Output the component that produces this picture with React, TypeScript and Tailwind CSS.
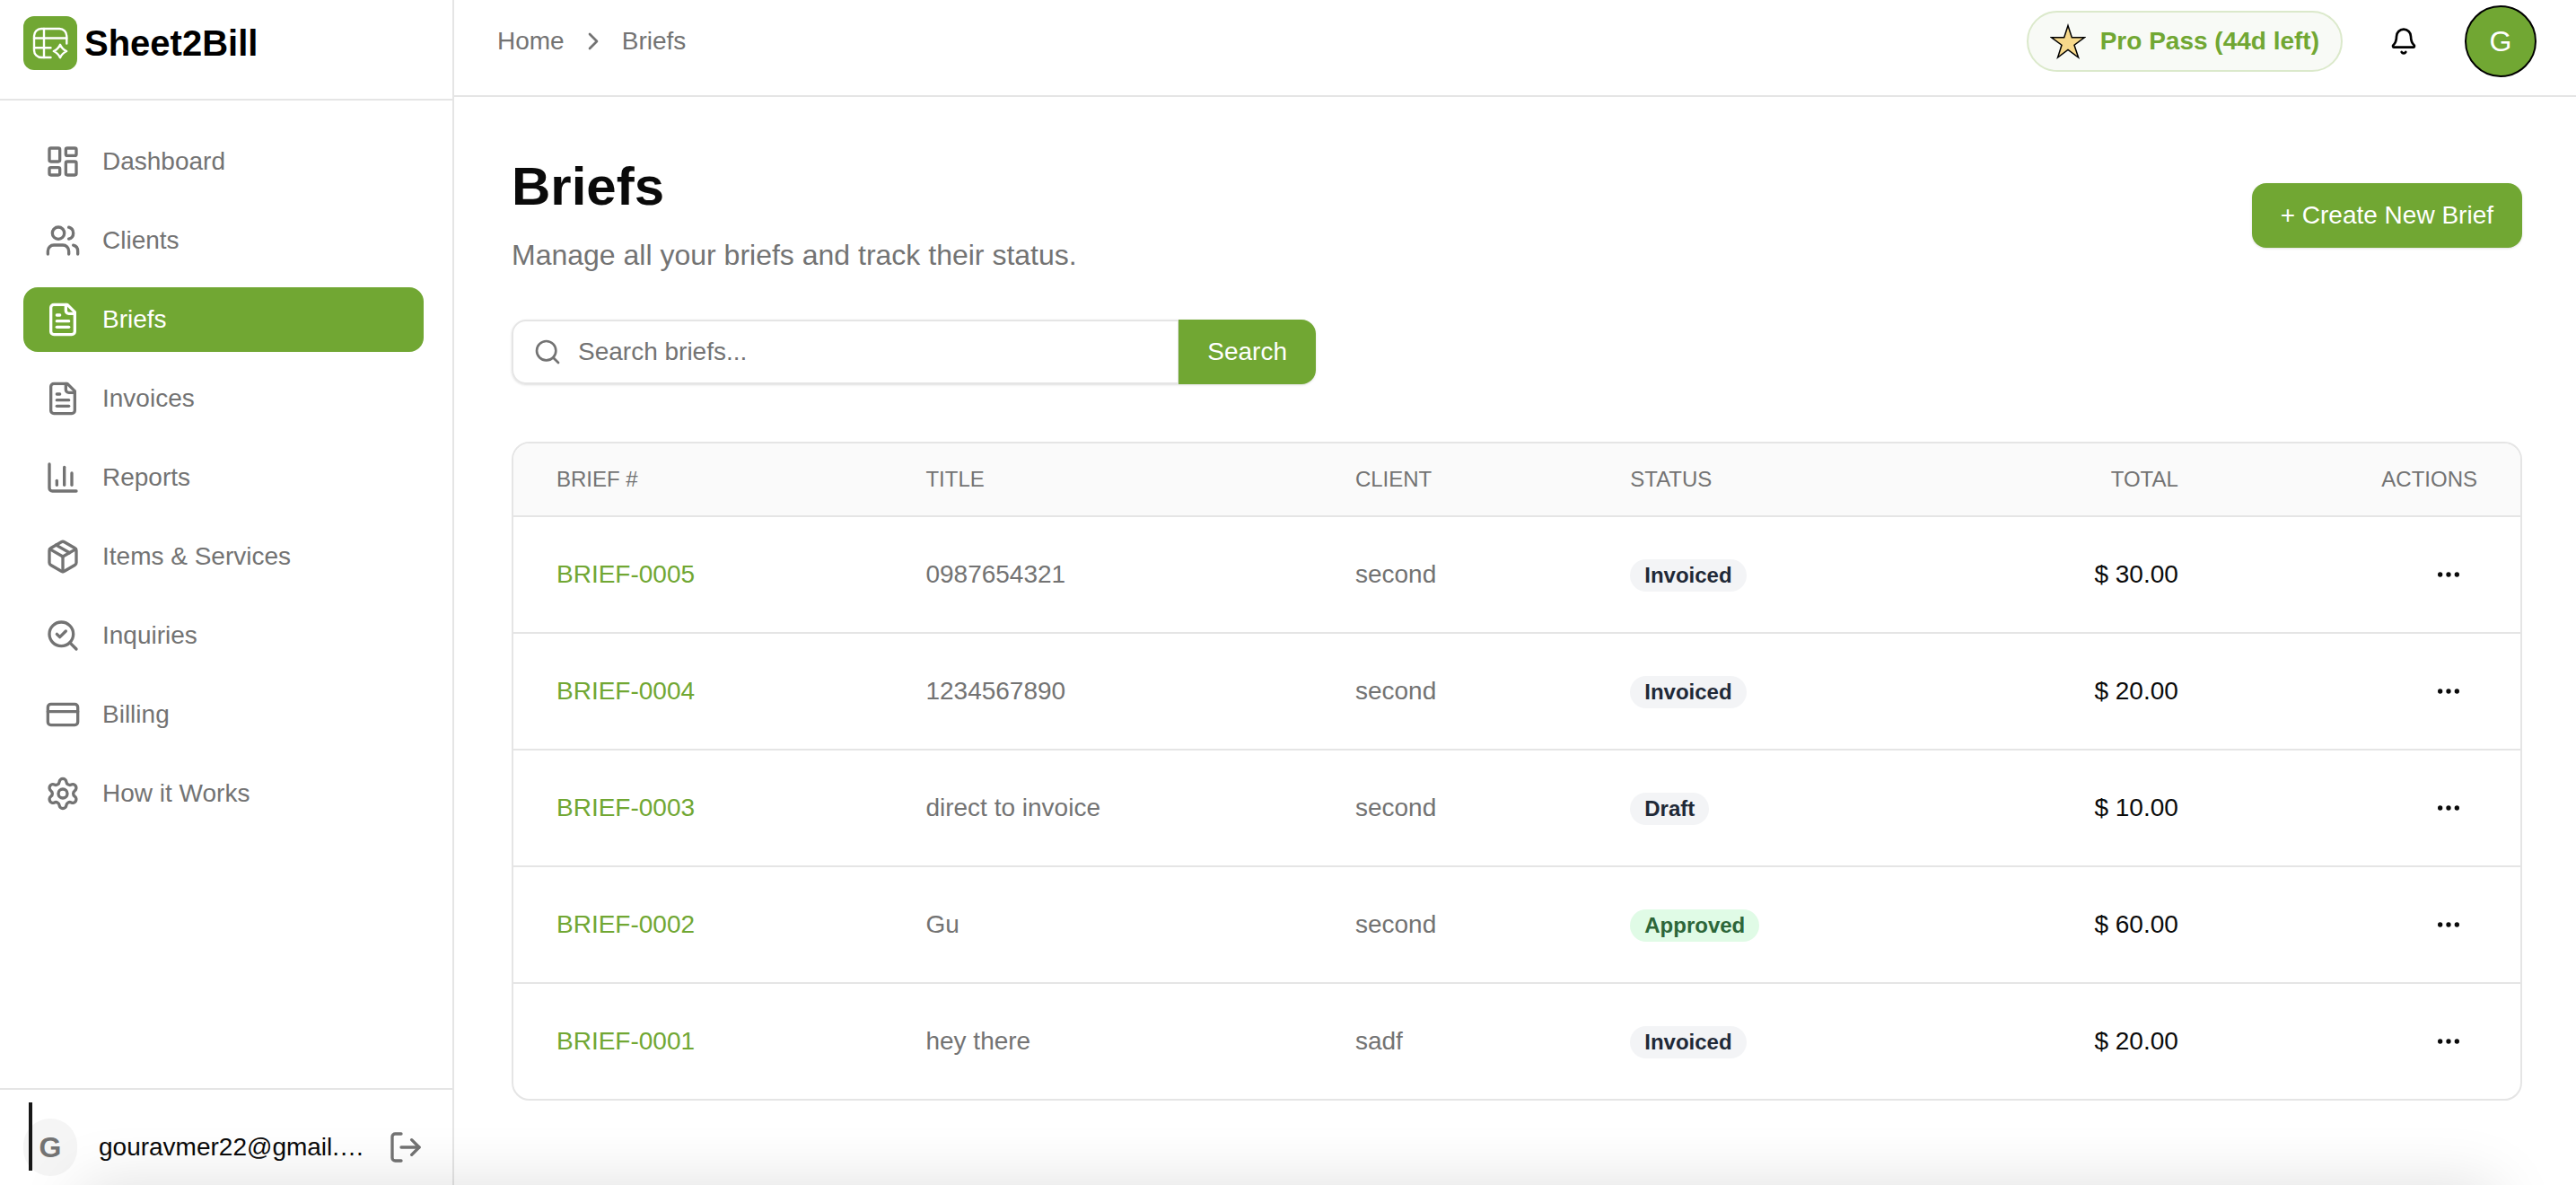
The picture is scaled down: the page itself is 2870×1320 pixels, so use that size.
import React from "react";
import {
  Bell,
  ChartColumn,
  ChevronRight,
  CreditCard,
  Ellipsis,
  LayoutDashboard,
  LogOut,
  Package,
  Search,
  SearchCheck,
  Settings,
  Users,
} from "lucide-react";
import type { ComponentType } from "react";

type IconProps = { className?: string };

function FileText({ className }: IconProps) {
  return (
    <svg
      viewBox="0 0 24 24"
      fill="none"
      stroke="currentColor"
      strokeWidth="2"
      strokeLinecap="round"
      strokeLinejoin="round"
      className={className}
      aria-hidden="true"
    >
      <path d="M15 2H6a2 2 0 0 0-2 2v16a2 2 0 0 0 2 2h12a2 2 0 0 0 2-2V7Z" />
      <path d="M14 2v4a2 2 0 0 0 2 2h4" />
      <path d="M10 9H8" />
      <path d="M16 13H8" />
      <path d="M16 17H8" />
    </svg>
  );
}

function LogoMark() {
  return (
    <svg
      viewBox="0 0 60 60"
      fill="none"
      stroke="white"
      strokeWidth="2.4"
      strokeLinecap="round"
      strokeLinejoin="round"
      className="size-[60px] shrink-0 rounded-xl bg-[#71a733]"
      aria-hidden="true"
    >
      <path d="M48.300 30.500V22a8 8 0 0 0-8-8H20a8 8 0 0 0-8 8v16a8 8 0 0 0 8 8H30.500" />
      <path d="M23 14V46M12 24.500H48.300M12 35.300H30.500" />
      <path d="M41 31.800q2.200 5 7.200 7.200-5 2.200-7.200 7.200-2.200-5-7.200-7.200 5-2.200 7.200-7.200Z" />
    </svg>
  );
}

function StarIcon() {
  return (
    <svg viewBox="0 0 40 40" className="size-10 shrink-0" aria-hidden="true">
      <path
        d="M20 2.500 24.300 15.800H38.300L27 24.200 31.600 38 20 29.500 8.600 38 13 24.200 1.700 15.800H15.700Z"
        fill="#f7d98b"
        stroke="#000000"
        strokeWidth="1.500"
      />
    </svg>
  );
}

const navItems: { label: string; icon: ComponentType<IconProps>; active?: boolean }[] = [
  { label: "Dashboard", icon: LayoutDashboard },
  { label: "Clients", icon: Users },
  { label: "Briefs", icon: FileText, active: true },
  { label: "Invoices", icon: FileText },
  { label: "Reports", icon: ChartColumn },
  { label: "Items & Services", icon: Package },
  { label: "Inquiries", icon: SearchCheck },
  { label: "Billing", icon: CreditCard },
  { label: "How it Works", icon: Settings },
];

const briefs = [
  { id: "BRIEF-0005", title: "0987654321", client: "second", status: "Invoiced", total: "$ 30.00" },
  { id: "BRIEF-0004", title: "1234567890", client: "second", status: "Invoiced", total: "$ 20.00" },
  { id: "BRIEF-0003", title: "direct to invoice", client: "second", status: "Draft", total: "$ 10.00" },
  { id: "BRIEF-0002", title: "Gu", client: "second", status: "Approved", total: "$ 60.00" },
  { id: "BRIEF-0001", title: "hey there", client: "sadf", status: "Invoiced", total: "$ 20.00" },
];

function Sidebar() {
  return (
    <aside className="flex w-[506px] shrink-0 flex-col border-r-2 border-[#e5e5e5]">
      <div className="flex h-28 items-center gap-2 border-b-2 border-[#e5e5e5] px-[26px] pb-[14px]">
        <LogoMark />
        <span className="text-[40px] leading-none font-bold text-black">Sheet2Bill</span>
      </div>
      <nav className="flex flex-1 flex-col gap-4 py-8 pr-8 pl-[26px]">
        {navItems.map(({ label, icon: Icon, active }) => (
          <a
            key={label}
            href="#"
            aria-current={active ? "page" : undefined}
            className={
              active
                ? "flex h-[72px] items-center gap-6 rounded-2xl bg-[#71a733] px-6 text-white"
                : "flex h-[72px] items-center gap-6 rounded-2xl px-6 text-[#737373]"
            }
          >
            <Icon className="size-10 shrink-0" />
            {label}
          </a>
        ))}
      </nav>
      <div className="relative flex h-[108px] items-center gap-6 border-t-2 border-[#e5e5e5] pt-[22px] pr-8 pl-[26px]">
        <span className="absolute top-[14px] left-8 h-[76px] w-1 bg-[#171717]" />
        <span className="flex h-16 w-[60px] shrink-0 items-center justify-center rounded-full bg-[#f5f5f5] text-[32px] font-bold text-[#737373]">
          G
        </span>
        <span className="whitespace-nowrap text-[#0a0a0a]">gouravmer22@gmail.…</span>
        <button type="button" aria-label="Log out" className="ml-auto text-[#737373]">
          <LogOut className="size-10" />
        </button>
      </div>
    </aside>
  );
}

function TopBar() {
  return (
    <header className="flex h-[108px] shrink-0 items-center justify-between border-b-2 border-[#e5e5e5] pr-11 pb-[14px] pl-12">
      <nav aria-label="Breadcrumb" className="flex items-center gap-4 text-[#737373]">
        <a href="#">Home</a>
        <ChevronRight className="size-8" />
        <a href="#">Briefs</a>
      </nav>
      <div className="flex items-center gap-8">
        <a
          href="#"
          className="flex h-[68px] items-center gap-4 rounded-full border-2 border-[#dbe9cb] bg-[#f8faf6] px-6 font-bold text-[#71a733]"
        >
          <StarIcon />
          Pro Pass (44d left)
        </a>
        <button
          type="button"
          aria-label="Notifications"
          className="flex size-[72px] items-center justify-center text-black"
        >
          <Bell className="size-8" />
        </button>
        <button
          type="button"
          aria-label="Account"
          className="flex size-20 items-center justify-center rounded-full border-2 border-black bg-[#71a733] text-[32px] text-white"
        >
          G
        </button>
      </div>
    </header>
  );
}

function SearchForm() {
  return (
    <form
      className="mt-12 flex h-[72px] w-full max-w-4xl rounded-2xl shadow-sm"
      onSubmit={(event) => event.preventDefault()}
    >
      <label className="flex min-w-0 flex-1 items-center gap-[18px] rounded-l-2xl border-2 border-r border-[#e5e5e5] bg-white pl-[22px] text-[#737373]">
        <Search className="size-8 shrink-0" />
        <input
          type="text"
          aria-label="Search briefs"
          placeholder="Search briefs..."
          className="min-w-0 flex-1 bg-transparent outline-none placeholder:text-[#737373]"
        />
      </label>
      <button type="submit" className="rounded-r-2xl bg-[#71a733] px-8 text-white">
        Search
      </button>
    </form>
  );
}

function StatusBadge({ status }: { status: string }) {
  return (
    <span
      className={
        status === "Approved"
          ? "inline-block rounded-full bg-[#e0fbe6] px-4 text-[24px] leading-9 font-bold text-[#2d6639]"
          : "inline-block rounded-full bg-[#f3f4f6] px-4 text-[24px] leading-9 font-bold text-[#1f2937]"
      }
    >
      {status}
    </span>
  );
}

function BriefsTable() {
  return (
    <div className="mt-16 overflow-hidden rounded-[20px] border-2 border-[#e5e5e5]">
      <table className="w-full table-fixed border-separate border-spacing-0 text-left">
        <thead>
          <tr className="h-[82px] bg-[#fafafa] text-[24px] text-[#737373] uppercase *:border-b-2 *:border-[#e5e5e5]">
            <th scope="col" className="w-[18.4%] px-12 font-normal">Brief #</th>
            <th scope="col" className="w-[21.4%] px-12 font-normal">Title</th>
            <th scope="col" className="w-[13.7%] px-12 font-normal">Client</th>
            <th scope="col" className="w-[17%] px-12 font-normal">Status</th>
            <th scope="col" className="w-[14.6%] px-12 text-right font-normal">Total</th>
            <th scope="col" className="px-12 text-right font-normal">Actions</th>
          </tr>
        </thead>
        <tbody>
          {briefs.map((brief) => (
            <tr
              key={brief.id}
              className="h-[130px] *:border-b-2 *:border-[#e5e5e5] last:h-32 last:*:border-b-0"
            >
              <td className="px-12">
                <a href="#" className="text-[#71a733]">
                  {brief.id}
                </a>
              </td>
              <td className="px-12 text-[#737373]">{brief.title}</td>
              <td className="px-12 text-[#737373]">{brief.client}</td>
              <td className="px-12">
                <StatusBadge status={brief.status} />
              </td>
              <td className="px-12 text-right text-[#0a0a0a]">{brief.total}</td>
              <td className="px-12">
                <button
                  type="button"
                  aria-label={`Actions for ${brief.id}`}
                  className="ml-auto flex size-16 items-center justify-center text-[#0a0a0a]"
                >
                  <Ellipsis className="size-8" />
                </button>
              </td>
            </tr>
          ))}
        </tbody>
      </table>
    </div>
  );
}

export default function App() {
  return (
    <div className="flex min-h-screen bg-white font-['Liberation_Sans',Arial,sans-serif] text-[28px] leading-10 text-[#0a0a0a]">
      <Sidebar />
      <div className="flex min-w-0 flex-1 flex-col">
        <TopBar />
        <main className="flex-1 pt-16 pr-[60px] pl-16">
          <div className="flex items-center justify-between">
            <div>
              <h1 className="text-[60px] leading-[72px] font-bold">Briefs</h1>
              <p className="mt-4 text-[32px] leading-[48px] text-[#737373]">
                Manage all your briefs and track their status.
              </p>
            </div>
            <button
              type="button"
              className="h-[72px] rounded-2xl bg-[#71a733] px-8 text-white shadow-sm"
            >
              + Create New Brief
            </button>
          </div>
          <SearchForm />
          <BriefsTable />
        </main>
      </div>
      <div className="pointer-events-none fixed right-[90px] -bottom-40 left-[90px] h-40 shadow-[0_0_70px_rgba(0,0,0,0.13)]" />
    </div>
  );
}
